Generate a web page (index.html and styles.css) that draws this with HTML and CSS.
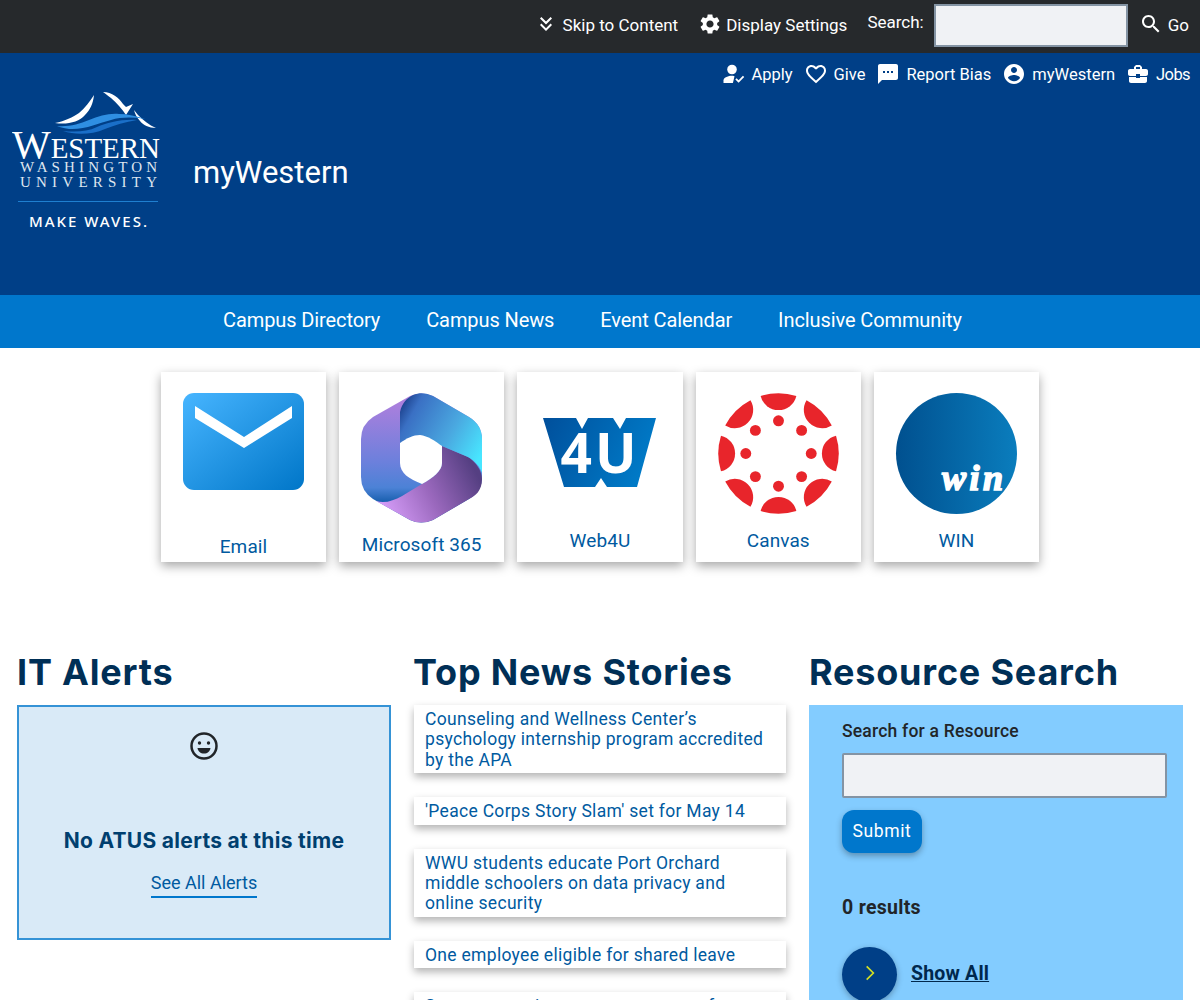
FILE: index.html
```html
<!DOCTYPE html>
<html lang="en">
<head>
<meta charset="utf-8">
<title>myWestern</title>
<link rel="stylesheet" href="styles.css">
</head>
<body>
<div class="topbar">
  <a class="top-link skip"><svg class="ic24" viewBox="0 0 24 24"><path d="M18 6.41L16.59 5 12 9.58 7.41 5 6 6.41l6 6z M18 13l-1.41-1.41L12 16.17l-4.59-4.58L6 13l6 6z"/></svg>Skip to Content</a>
  <a class="top-link settings"><svg class="ic24" viewBox="0 0 24 24"><path d="M19.14 12.94c.04-.3.06-.61.06-.94 0-.32-.02-.64-.07-.94l2.03-1.58c.18-.14.23-.41.12-.61l-1.92-3.32c-.12-.22-.37-.29-.59-.22l-2.39.96c-.5-.38-1.03-.7-1.62-.94l-.36-2.54c-.04-.24-.24-.41-.48-.41h-3.84c-.24 0-.43.17-.47.41l-.36 2.54c-.59.24-1.13.57-1.62.94l-2.39-.96c-.22-.08-.47 0-.59.22L2.74 8.87c-.12.21-.08.47.12.61l2.03 1.58c-.05.3-.09.63-.09.94s.02.64.07.94l-2.03 1.58c-.18.14-.23.41-.12.61l1.92 3.32c.12.22.37.29.59.22l2.39-.96c.5.38 1.03.7 1.62.94l.36 2.54c.05.24.24.41.48.41h3.84c.24 0 .44-.17.47-.41l.36-2.54c.59-.24 1.13-.56 1.62-.94l2.39.96c.22.08.47 0 .59-.22l1.92-3.32c.12-.22.07-.47-.12-.61l-2.01-1.58zM12 15.6c-1.98 0-3.6-1.62-3.6-3.6s1.62-3.6 3.6-3.6 3.6 1.62 3.6 3.6-1.62 3.6-3.6 3.6z"/></svg>Display Settings</a>
  <span class="search-label">Search:</span>
  <input class="top-search" type="text" aria-label="Search">
  <a class="top-link go"><svg class="ic24" viewBox="0 0 24 24"><path d="M15.5 14h-.79l-.28-.27C15.41 12.59 16 11.11 16 9.5 16 5.91 13.09 3 9.5 3S3 5.91 3 9.5 5.91 16 9.5 16c1.61 0 3.09-.59 4.23-1.57l.27.28v.79l5 4.99L20.49 19l-4.99-5zm-6 0C7.01 14 5 11.99 5 9.5S7.01 5 9.5 5 14 7.01 14 9.5 11.99 14 9.5 14z"/></svg>Go</a>
</div>

<header class="masthead">
  <div class="quick">
    <a class="quick-link"><svg class="ic24" viewBox="0 0 24 24"><circle cx="11" cy="7.5" r="4.8"/><path d="M2.500 21v-2.600c0-3 5.400-4.600 8-4.600 1 0 2 .1 3 .4l-1.600 6.800z"/><path d="M14.300 17.500l1.300-1.300 2 2 4.300-4.400 1.300 1.300-5.600 5.700z"/></svg>Apply</a>
    <a class="quick-link"><svg class="ic24" viewBox="0 0 24 24"><path d="M16.500 3c-1.740 0-3.410.81-4.500 2.090C10.910 3.810 9.240 3 7.500 3 4.420 3 2 5.420 2 8.500c0 3.780 3.400 6.860 8.550 11.540L12 21.350l1.450-1.320C18.600 15.360 22 12.280 22 8.500 22 5.420 19.580 3 16.500 3zm-4.400 15.550l-.1.100-.1-.1C7.140 14.240 4 11.390 4 8.500 4 6.500 5.500 5 7.500 5c1.540 0 3.040.99 3.570 2.360h1.870C13.460 5.990 14.960 5 16.500 5c2 0 3.500 1.500 3.500 3.500 0 2.890-3.140 5.740-7.900 10.050z"/></svg>Give</a>
    <a class="quick-link"><svg class="ic24" viewBox="0 0 24 24"><path d="M20 2H4c-1.100 0-1.990.9-1.990 2L2 22l4-4h14c1.100 0 2-.9 2-2V4c0-1.100-.9-2-2-2zM9 11H7V9h2v2zm4 0h-2V9h2v2zm4 0h-2V9h2v2z"/></svg>Report Bias</a>
    <a class="quick-link"><svg class="ic24" viewBox="0 0 24 24"><path d="M12 2C6.480 2 2 6.480 2 12s4.480 10 10 10 10-4.480 10-10S17.520 2 12 2zm0 3c1.660 0 3 1.340 3 3s-1.340 3-3 3-3-1.340-3-3 1.340-3 3-3zm0 14.200c-2.500 0-4.710-1.280-6-3.220.03-1.990 4-3.080 6-3.080 1.990 0 5.970 1.090 6 3.080-1.290 1.940-3.500 3.220-6 3.220z"/></svg>myWestern</a>
    <a class="quick-link jobs"><svg class="ic24" viewBox="0 0 24 24"><path d="M10 16v-1H3.010L3 19c0 1.110.89 2 2 2h14c1.110 0 2-.89 2-2v-4h-7v1h-4zm10-9h-4.010V5l-2-2h-4l-2 2v2H4c-1.100 0-2 .9-2 2v3c0 1.110.89 2 2 2h6v-2h4v2h6c1.100 0 2-.9 2-2V9c0-1.100-.9-2-2-2zm-6 0h-4V5h4v2z"/></svg>Jobs</a>
  </div>
  <div class="brand">
    <svg class="logo" viewBox="0 0 148 138" role="img" aria-label="Western Washington University. Make Waves.">
      <g transform="translate(43 0)">
        <path class="w" d="M0 31C10 29 18 25 24 21 30 16 35 9 39 3 38 12 35 18 30 23 24 30 12 33 0 31z"/>
        <path class="w" d="M48 0C57 0 64 6 68 12L71 15 78 12 71 23C67 17 62 11 56 6 53 4 51 2 48 0z"/>
        <path class="w" d="M79 18L83 23C88 28 94 33 101 36 94 36 88 33 85 29 82 26 80 22 79 18z"/>
        <path class="b" d="M2 34C14 35 24 32 34 28 44 24 54 21 64 22 72 22 82 24 90 27 78 25 66 25 56 28 44 31 30 38 14 37 8 36 4 35 2 34z"/>
        <path class="l" d="M8 39C20 40 32 40 42 35 52 31 66 27 82 28 70 30 60 33 50 37 36 43 20 43 8 39z"/>
      </g>
      <text class="logo-w" x="0" y="66" textLength="148" lengthAdjust="spacing"><tspan class="cap">W</tspan>ESTERN</text>
      <text class="logo-s" x="8" y="80" textLength="137" lengthAdjust="spacing">WASHINGTON</text>
      <text class="logo-s" x="8" y="95" textLength="137" lengthAdjust="spacing">UNIVERSITY</text>
      <rect class="logo-rule" x="6" y="109" width="140" height="1"/>
      <text class="logo-m" x="17" y="135" textLength="118" lengthAdjust="spacing">MAKE WAVES.</text>
    </svg>
    <div class="site-name">myWestern</div>
  </div>
</header>

<nav class="mainnav">
  <a>Campus Directory</a>
  <a>Campus News</a>
  <a>Event Calendar</a>
  <a>Inclusive Community</a>
</nav>

<section class="tiles">
  <a class="tile">
    <svg class="tile-ic" viewBox="0 0 121 121">
      <defs><linearGradient id="em" x1="0" y1="0" x2="1" y2="1"><stop offset="0" stop-color="#47b5ff"/><stop offset="1" stop-color="#0076c8"/></linearGradient></defs>
      <rect width="121" height="97" rx="11" fill="url(#em)"/>
      <path d="M12 13L61 44 109 13V25L61 55 12 25z" fill="#fff"/>
    </svg>
    <span class="tile-label email">Email</span>
  </a>
  <a class="tile">
    <svg class="tile-ic ms" viewBox="0 0 121 130">
      <defs>
        <linearGradient id="ml" x1="0.4" y1="0.05" x2="0.4" y2="0.85"><stop offset="0" stop-color="#ae7fdd"/><stop offset=".6" stop-color="#6c80dc"/><stop offset=".85" stop-color="#4c82d6"/><stop offset="1" stop-color="#145cab"/></linearGradient>
        <linearGradient id="mb" x1="0.05" y1="0.85" x2="1" y2="0.5"><stop offset="0" stop-color="#d89ffb"/><stop offset=".5" stop-color="#9a68bd"/><stop offset="1" stop-color="#553f82"/></linearGradient>
        <linearGradient id="mt" x1="0" y1="0.2" x2="1" y2="0.75"><stop offset="0" stop-color="#1f4592"/><stop offset=".14" stop-color="#3a70c4"/><stop offset=".6" stop-color="#4aa8e0"/><stop offset="1" stop-color="#48e6ff"/></linearGradient>
      </defs>
      <path fill="url(#ml)" d="M49 3Q60-2 72 3L108 24Q121 32 121 46V84Q121 98 108 106L72 127Q60 132 49 127L12 106Q0 98 0 84V46Q0 32 12 24Z"/>
      <path fill="url(#mb)" d="M15 108C30 113 45 100 61 91 72 85 81 78 81 70V53L107 64C115 69 121 78 121 86 121 98 114 103 108 106L72 127Q60 132 49 127Z"/>
      <path fill="url(#mt)" d="M39 51V19C41 10 46 5 52 2 59-1 66 0 72 3L108 24Q121 32 121 46V80C119 74 114 68 107 64L81 53 59 42Z"/>
      <path fill="#fff" d="M39 50C46 45 52 42 59 42 67 43 74 48 81 53V70C81 78 72 85 61 91 48 86 39 80 39 70Z"/>
    </svg>
    <span class="tile-label ms-label">Microsoft 365</span>
  </a>
  <a class="tile">
    <svg class="tile-ic w4u" viewBox="0 0 113 70">
      <defs><linearGradient id="wu" x1="0" y1="0" x2="1" y2="0.3"><stop offset="0" stop-color="#004f9b"/><stop offset="1" stop-color="#0079c6"/></linearGradient></defs>
      <path fill="url(#wu)" d="M0 0H33L39 11 45 0H70L77 11 83 0H113L94 69H64L58 60 52 69H21Z"/>
      <text class="w4u-text" x="57" y="55" text-anchor="middle">4U</text>
    </svg>
    <span class="tile-label">Web4U</span>
  </a>
  <a class="tile">
    <svg class="tile-ic" viewBox="-61 -61 122 122">
      <g fill="#e8252b">
        <path id="wd" d="M-18-58A61 61 0 0 1 18-58 18.500 18.500 0 0 1-18-58z"/>
        <use href="#wd" transform="rotate(45)"/><use href="#wd" transform="rotate(90)"/><use href="#wd" transform="rotate(135)"/>
        <use href="#wd" transform="rotate(180)"/><use href="#wd" transform="rotate(225)"/><use href="#wd" transform="rotate(270)"/><use href="#wd" transform="rotate(315)"/>
        <circle cy="-33" r="5.500"/><circle cy="33" r="5.500"/><circle cx="-33" r="5.500"/><circle cx="33" r="5.500"/>
        <circle cx="-23.300" cy="-23.300" r="5.500"/><circle cx="23.300" cy="-23.300" r="5.500"/><circle cx="-23.300" cy="23.300" r="5.500"/><circle cx="23.300" cy="23.300" r="5.500"/>
      </g>
    </svg>
    <span class="tile-label">Canvas</span>
  </a>
  <a class="tile">
    <div class="win-logo"><span class="win-text">win</span></div>
    <span class="tile-label">WIN</span>
  </a>
</section>

<main class="cols">
  <section class="col">
    <h2>IT Alerts</h2>
    <div class="alert">
      <svg class="smile" viewBox="0 0 28 28"><circle cx="14" cy="14" r="12.500" fill="none" stroke="#212529" stroke-width="2.500"/><circle cx="9.500" cy="11" r="1.700" fill="#212529"/><circle cx="18.500" cy="11" r="1.700" fill="#212529"/><path d="M7.500 16H20.500C20 19.500 17.500 21.500 14 21.500S8 19.500 7.500 16z" fill="#212529"/></svg>
      <p class="alert-title">No ATUS alerts at this time</p>
      <a class="alert-link">See All Alerts</a>
    </div>
  </section>
  <section class="col">
    <h2>Top News Stories</h2>
    <ul class="news">
      <li>Counseling and Wellness Center’s psychology internship program accredited by the APA</li>
      <li>'Peace Corps Story Slam' set for May 14</li>
      <li>WWU students educate Port Orchard middle schoolers on data privacy and online security</li>
      <li>One employee eligible for shared leave</li>
      <li>Summer session courses are open for students</li>
    </ul>
  </section>
  <section class="col">
    <h2>Resource Search</h2>
    <div class="resource">
      <label class="res-label" for="res">Search for a Resource</label>
      <input class="res-input" id="res" type="text">
      <button class="submit" type="button">Submit</button>
      <p class="results">0 results</p>
      <div class="show-all">
        <span class="circle"><svg viewBox="0 0 12 20" class="chev"><path d="M2 2L10 10 2 18" fill="none" stroke="#d4e021" stroke-width="2"/></svg></span>
        <a class="show-link">Show All</a>
      </div>
    </div>
  </section>
</main>
</body>
</html>
```

FILE: styles.css
```css
* { box-sizing: border-box; }
html, body { height: 1000px; overflow: hidden; }
body { margin: 0; font-family: Roboto, "Noto Sans", sans-serif; color: #212529; background: #fff; }
svg { fill: currentColor; flex: none; }
.ic24 { width: 24px; height: 24px; }

.topbar { height: 53px; background: #26292c; color: #fff; display: flex; align-items: center; justify-content: flex-end; font-size: 17px; padding-right: 11px; }
.top-link { display: flex; align-items: center; gap: 5px; margin-bottom: 4px; }
.top-link svg { margin-bottom: 2px; }
.skip { margin-right: 20px; }
.settings { gap: 4px; margin-right: 20px; }
.search-label { margin: 0 10px 10px 0; }
.top-search { width: 194px; height: 43px; margin-bottom: 3px; background: #f0f2f5; border: 2px solid #8494a4; }
.go { margin-left: 11px; }

.masthead { height: 242px; background: #003f87; color: #fff; }
.quick { display: flex; justify-content: flex-end; gap: 11px; padding: 9px 10px 0 0; font-size: 16.500px; }
.quick-link { display: flex; align-items: center; gap: 6px; }
.jobs { letter-spacing: -.6px; }
.brand { display: flex; align-items: center; gap: 33px; padding-left: 12px; margin-top: 6px; }
.logo { display: block; width: 148px; height: 138px; }
.logo .w { fill: #fff; }
.logo .b { fill: #2f8fe2; }
.logo .l { fill: #1a6fc8; }
.logo-w { font-family: "Liberation Serif", serif; font-size: 29px; fill: #fff; }
.cap { font-size: 41px; }
.logo-s { font-family: "Liberation Serif", serif; font-size: 15px; fill: #dfe6ef; }
.logo-rule { fill: #1f7fd0; }
.logo-m { font-family: "Noto Sans", sans-serif; font-size: 15px; font-weight: 500; fill: #fff; }
.site-name { font-size: 31px; margin-top: 22px; }

.mainnav { height: 53px; background: #0077cc; color: #fff; display: flex; align-items: center; gap: 46px; padding: 0 0 3px 223px; font-size: 20px; letter-spacing: -.1px; }

.tiles { display: flex; justify-content: center; gap: 13px; padding-top: 24px; height: 302px; }
.tile { width: 165.250px; height: 190px; background: #fff; box-shadow: 0 4px 10px rgba(0,0,0,.35); color: #005aa0; display: flex; flex-direction: column; align-items: center; padding-top: 21px; }
.tile-ic { width: 121px; height: 121px; }
.tile-ic.ms { height: 130px; }
.tile-ic.w4u { width: 113px; height: 70px; margin: 25px 1px 26px 0; overflow: visible; }
.tile-label { font-size: 19px; letter-spacing: .1px; line-height: 24px; margin-top: 15px; }
.tile-label.email { margin-top: 21px; }
.tile-label.ms-label { margin-top: 10px; }
.w4u-text { font-family: "Noto Sans", sans-serif; font-weight: 700; font-size: 55px; letter-spacing: 3px; fill: #fff; }
.win-logo { width: 121px; height: 121px; border-radius: 50%; background: linear-gradient(90deg, #00508f, #0a7dbd); position: relative; overflow: hidden; }
.win-text { position: absolute; left: 46px; top: 65px; font-family: "Liberation Serif", serif; font-style: italic; font-weight: 700; font-size: 36px; line-height: 40px; color: #fff; letter-spacing: 3.500px; -webkit-text-stroke: 1.600px #fff; }

.cols { display: grid; grid-template-columns: repeat(3, 374px); gap: 22px; padding: 0 17px; }
.col h2 { margin: 0 0 11px; font-family: Inter, sans-serif; font-weight: 700; font-size: 36px; letter-spacing: .8px; line-height: 44px; color: #002f56; }
.alert { height: 235px; background: #d9eaf7; border: 2px solid #3593d6; text-align: center; padding-top: 25px; }
.smile { display: block; width: 28px; height: 28px; margin: 0 auto; }
.alert-title { margin: 67px 0 0; font-family: Inter, sans-serif; font-weight: 700; font-size: 21px; letter-spacing: .3px; line-height: 28px; color: #003f6f; }
.alert-link { display: inline-block; margin-top: 16px; font-size: 18px; line-height: 24px; color: #005aa0; border-bottom: 2px solid #0077cc; padding-bottom: 1px; }

.news { list-style: none; margin: 1px 1px 0; padding: 0; display: flex; flex-direction: column; gap: 24px; }
.news li { background: #fff; box-shadow: 0 4px 8px rgba(0,0,0,.3); padding: 4px 11px 3px; font-size: 17.500px; letter-spacing: .3px; line-height: 20.400px; color: #005aa0; }

.resource { height: 400px; background: #83ccff; padding: 14px 16px 0 33px; }
.res-label { display: block; font-size: 17.500px; font-weight: 500; letter-spacing: .2px; line-height: 24px; color: #212529; }
.res-input { display: block; width: 100%; height: 45px; margin-top: 10px; background: #f0f2f5; border: 2px solid #8494a4; border-radius: 2px; }
.submit { display: block; margin-top: 12px; width: 80px; height: 43px; border: 0; border-radius: 12px; background: #0077cc; color: #fff; font: 400 17.500px Roboto, sans-serif; letter-spacing: .6px; box-shadow: 0 3px 6px rgba(0,0,0,.3); padding: 0 0 2px; }
.results { margin: 43px 0 0; font-size: 19.500px; font-weight: 700; letter-spacing: .3px; line-height: 24px; }
.show-all { display: flex; align-items: center; gap: 14px; margin-top: 27px; }
.circle { width: 55px; height: 55px; border-radius: 50%; background: #003f87; display: flex; align-items: center; justify-content: center; box-shadow: 0 2px 6px rgba(0,0,0,.3); }
.chev { width: 10px; height: 18px; margin-bottom: 4px; }
.show-link { font-size: 19.500px; font-weight: 700; letter-spacing: .2px; color: #00284d; text-decoration: underline; margin-bottom: 2px; }
```
